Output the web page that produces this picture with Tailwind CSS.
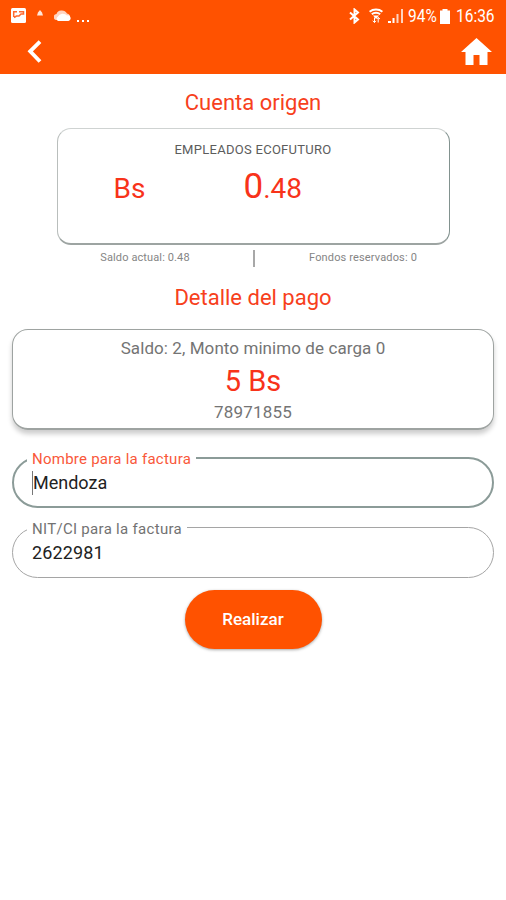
<!DOCTYPE html>
<html lang="es">
  <head>
    <meta charset="UTF-8" />
    <meta name="viewport" content="width=device-width, initial-scale=1.0" />
    <title>Detalle del pago</title>
    <script src="https://cdn.jsdelivr.net/npm/@tailwindcss/browser@4"></script>
  </head>
  <body class="bg-white font-[Roboto,sans-serif] min-h-screen overflow-hidden">
    <header class="bg-[#ff5200] h-[74px] text-white">
      <!-- Status bar -->
      <div class="h-8 flex items-center justify-between pl-[11px] pr-[10px]">
        <div class="flex items-center">
          <svg class="w-[15px] h-[15px] -mt-px" viewBox="0 0 15 15" fill="none">
            <rect width="15" height="15" rx="1.5" fill="#fff" />
            <path d="M2.700 9V3.700H6M8 3.700h4.500V6H10L8 8H5.500L3 9.500" stroke="#ff6a30" stroke-width="1.500" />
          </svg>
          <svg class="w-[6px] h-[6px] ml-[11px] -mt-1.5" viewBox="0 0 6 6" fill="#fff" opacity=".85">
            <path d="M3 0l2 2.500 1 3H0l1-3z" />
          </svg>
          <svg class="w-[17px] h-[11px] ml-[11px] -mt-0.5" viewBox="0 0 17 11">
            <path d="M3 10a3 3 0 0 1-.5-6A5 5 0 0 1 7 .5a6 6 0 0 1 6 3 3.500 3.500 0 0 1 2 6z" fill="#ffd3c0" />
            <path d="M4 11a2.500 2.500 0 0 1 0-4.500 5 4 0 0 1 9-1 2.500 2.500 0 0 1 1.500 5.500z" fill="#fff" />
          </svg>
          <div class="flex gap-[3px] ml-[6px] mt-[10px]">
            <span class="w-[2px] h-[2px] bg-white"></span>
            <span class="w-[2px] h-[2px] bg-white"></span>
            <span class="w-[2px] h-[2px] bg-white"></span>
          </div>
        </div>
        <div class="flex items-center">
          <svg class="w-[11px] h-4" viewBox="0 0 11 16" fill="none" stroke="#fff" stroke-width="2">
            <path d="M1 4.500l8 7L5.500 14.500v-13L9 4.500l-8 7" />
          </svg>
          <svg class="w-[14px] h-[16px] ml-[9px] -mr-px -ml-0.5" viewBox="0 0 14 16" fill="none" stroke="#fff">
            <path d="M.6 3.700a9 7 0 0 1 12.800 0M2.800 6.200a6 5 0 0 1 8.400 0" stroke-width="2" />
            <path d="M4 7.500h6L7 11z" fill="#fff" stroke="none" />
            <path d="M5.500 9.500v5M3.700 12.800l1.800 1.700L7 12.800M9.200 14.500V9.500M7.700 11l1.500-1.500L11 11" stroke-width="1" />
          </svg>
          <svg class="w-[16px] h-[14px] ml-[6px]" viewBox="0 0 16 14" fill="#fff">
            <path d="M0 12h3v2H0zM4.500 9h2v5h-2z" />
            <path d="M8.500 5h2v9h-2zM13 0h2v14h-2z" opacity=".75" />
          </svg>
          <span class="text-[18px] leading-5 w-[30px] ml-[4px] whitespace-nowrap"><span class="inline-block origin-left scale-x-[.86]">94%</span></span>
          <svg class="w-[10px] h-[15px] ml-[2px]" viewBox="0 0 10 15" fill="#fff">
            <path d="M2.500 0h5v1.500H10V15H0V1.500h2.500z" />
          </svg>
          <span class="text-[18px] leading-5 w-[40px] ml-[6px] whitespace-nowrap"><span class="inline-block origin-left scale-x-[.86]">16:36</span></span>
        </div>
      </div>
      <!-- Navigation -->
      <div class="flex justify-between pl-[27px] pr-[14px] pt-[6px]">
        <svg class="w-[15px] h-[23px] mt-[2px]" viewBox="0 0 15 23" fill="none" stroke="#fff" stroke-width="3.800">
          <path d="M13 1.700L3.200 11.300 13 21.500" />
        </svg>
        <svg class="w-[31px] h-[27px]" viewBox="0 0 31 27" fill="#fff">
          <path d="M15.500 0L31 14h-4.500v13h-8V17h-6v10h-8V14H0z" />
        </svg>
      </div>
    </header>

    <main class="flex flex-col items-center">
      <h1 class="mt-[15px] h-7 text-[22px] leading-7 text-[#f7401c]">Cuenta origen</h1>

      <section class="mt-[11px] w-[393px] h-[117px] border border-b-2 border-t-[#cfd3d2] border-l-[#b9bebc] border-r-[#82928f] border-b-[#9da4a2] rounded-[14px]">
        <p class="mt-[13px] text-center text-[13px] leading-4 text-[#5c5c5c] tracking-[.28px]">EMPLEADOS ECOFUTURO</p>
        <div class="flex items-baseline text-[#f8331a] pl-[56px] mt-[9px] leading-10">
          <span class="w-[130px] text-[28px]">Bs</span>
          <span class="text-[35px]">0</span>
          <span class="text-[28px]">.48</span>
        </div>
      </section>

      <div class="w-[393px] h-[26px] flex text-[11px] text-[#858585]">
        <span class="w-[196px] pr-[19px] text-center leading-[26px] tracking-[.12px]">Saldo actual: 0.48</span>
        <span class="w-[2px] h-[17px] mt-[5px] bg-[#a8a8a8]"></span>
        <span class="flex-1 pl-[22px] text-center leading-[26px] tracking-[.15px]">Fondos reservados: 0</span>
      </div>

      <h2 class="mt-[13px] h-7 text-[22px] leading-7 text-[#f7401c]">Detalle del pago</h2>

      <section class="mt-[17px] w-[482px] h-[101px] border border-b-2 border-[#9ea3a1] rounded-2xl text-center shadow-[0_4px_5px_rgba(0,0,0,0.2)]">
        <p class="mt-[6px] text-[17px] leading-6 text-[#747474] tracking-[.08px]">Saldo: 2, Monto minimo de carga 0</p>
        <p class="pt-px text-[29px] leading-10 text-[#f8331a]">5 Bs</p>
        <p class="-mt-px text-[17px] leading-6 text-[#747474] tracking-[.2px]">78971855</p>
      </section>

      <form class="flex flex-col items-center">
        <fieldset class="mt-[17px] w-[482px] h-[61px] border-2 border-[#8b9b98] rounded-[26px] pl-[13px]">
          <legend class="px-[5px] pt-0.5 text-[15px] leading-5 text-[#f9583a] tracking-[.25px]">Nombre para la factura</legend>
          <div class="flex items-center pt-0.5 pl-[5px]">
            <span class="w-px h-6 bg-[#777]"></span>
            <span class="text-[18px] leading-6 text-[#222]">Mendoza</span>
          </div>
        </fieldset>
        <fieldset class="mt-2 w-[482px] h-[62px] border border-[#a5a5a5] rounded-[26px] pl-[14px]">
          <legend class="px-[5px] pt-1 text-[15px] leading-[18px] text-[#727272] tracking-[.3px]">NIT/CI para la factura</legend>
          <p class="pt-[3px] pl-[5px] text-[18px] leading-6 text-[#222] tracking-[.15px]">2622981</p>
        </fieldset>
        <button
          type="button"
          class="mt-3 w-[137px] h-[59px] rounded-full bg-[#ff5200] text-white text-[17px] font-medium shadow-[0_1px_3px_rgba(0,0,0,0.35)]"
        >
          Realizar
        </button>
      </form>
    </main>
  </body>
</html>
